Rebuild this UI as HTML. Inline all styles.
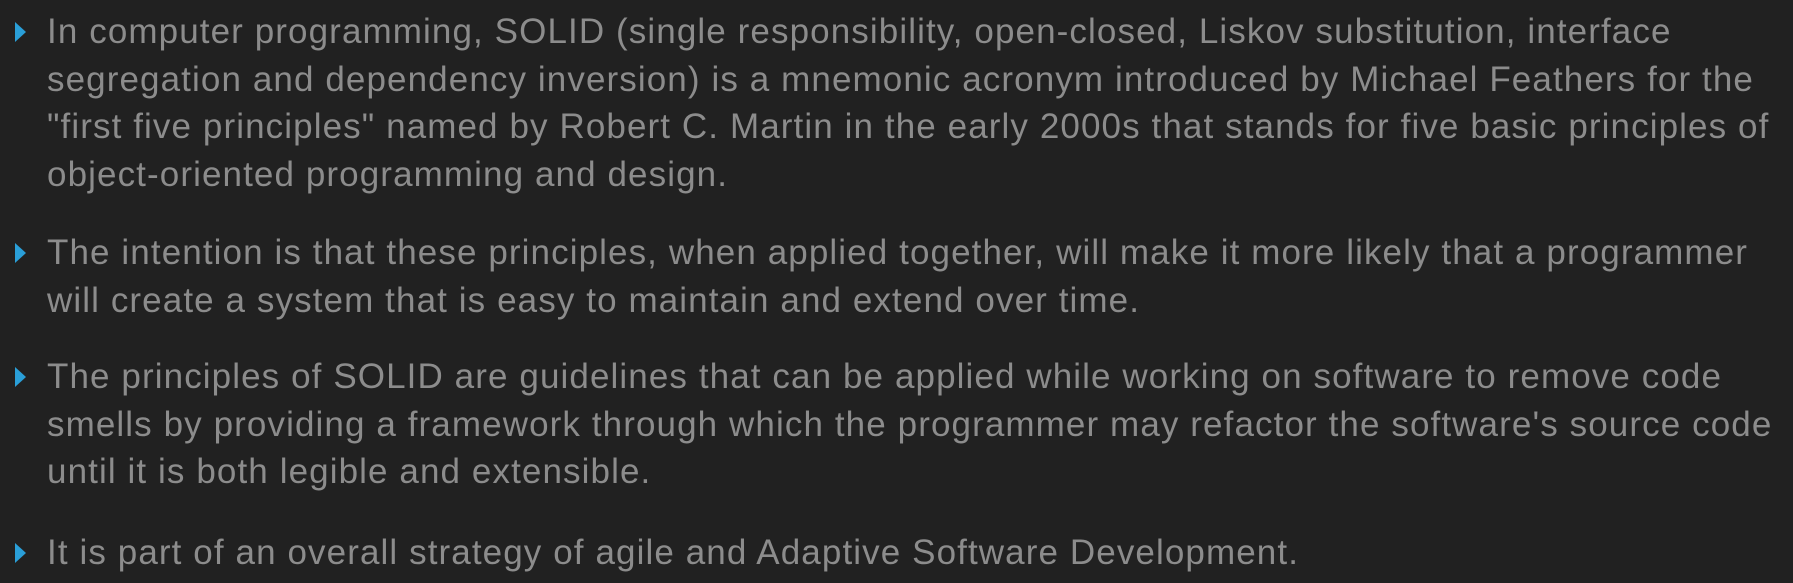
<!DOCTYPE html>
<html><head><meta charset="utf-8"><style>
html,body{margin:0;padding:0;background:#212121;width:1793px;height:583px;overflow:hidden}
body{font-family:"Liberation Sans",sans-serif;font-size:35px;color:#8c8c8c;letter-spacing:1.1px}
.p{position:absolute;left:47px}
.l{height:47.5px;line-height:47.5px;white-space:nowrap}
.b{position:absolute;left:15px;width:0;height:0;border-top:10px solid transparent;border-bottom:10px solid transparent;border-left:11px solid #2a9fd8}
</style></head><body>
<div class="b" style="top:22px"></div>
<div class="p" style="top:8px">
<div class="l">In computer programming, SOLID (single responsibility, open-closed, Liskov substitution, interface</div>
<div class="l">segregation and dependency inversion) is a mnemonic acronym introduced by Michael Feathers for the</div>
<div class="l">"first five principles" named by Robert C. Martin in the early 2000s that stands for five basic principles of</div>
<div class="l">object-oriented programming and design.</div>
</div>
<div class="b" style="top:243px"></div>
<div class="p" style="top:229px">
<div class="l">The intention is that these principles, when applied together, will make it more likely that a programmer</div>
<div class="l">will create a system that is easy to maintain and extend over time.</div>
</div>
<div class="b" style="top:367px"></div>
<div class="p" style="top:353px">
<div class="l">The principles of SOLID are guidelines that can be applied while working on software to remove code</div>
<div class="l">smells by providing a framework through which the programmer may refactor the software's source code</div>
<div class="l">until it is both legible and extensible.</div>
</div>
<div class="b" style="top:543px"></div>
<div class="p" style="top:529px">
<div class="l">It is part of an overall strategy of agile and Adaptive Software Development.</div>
</div>
</body></html>
